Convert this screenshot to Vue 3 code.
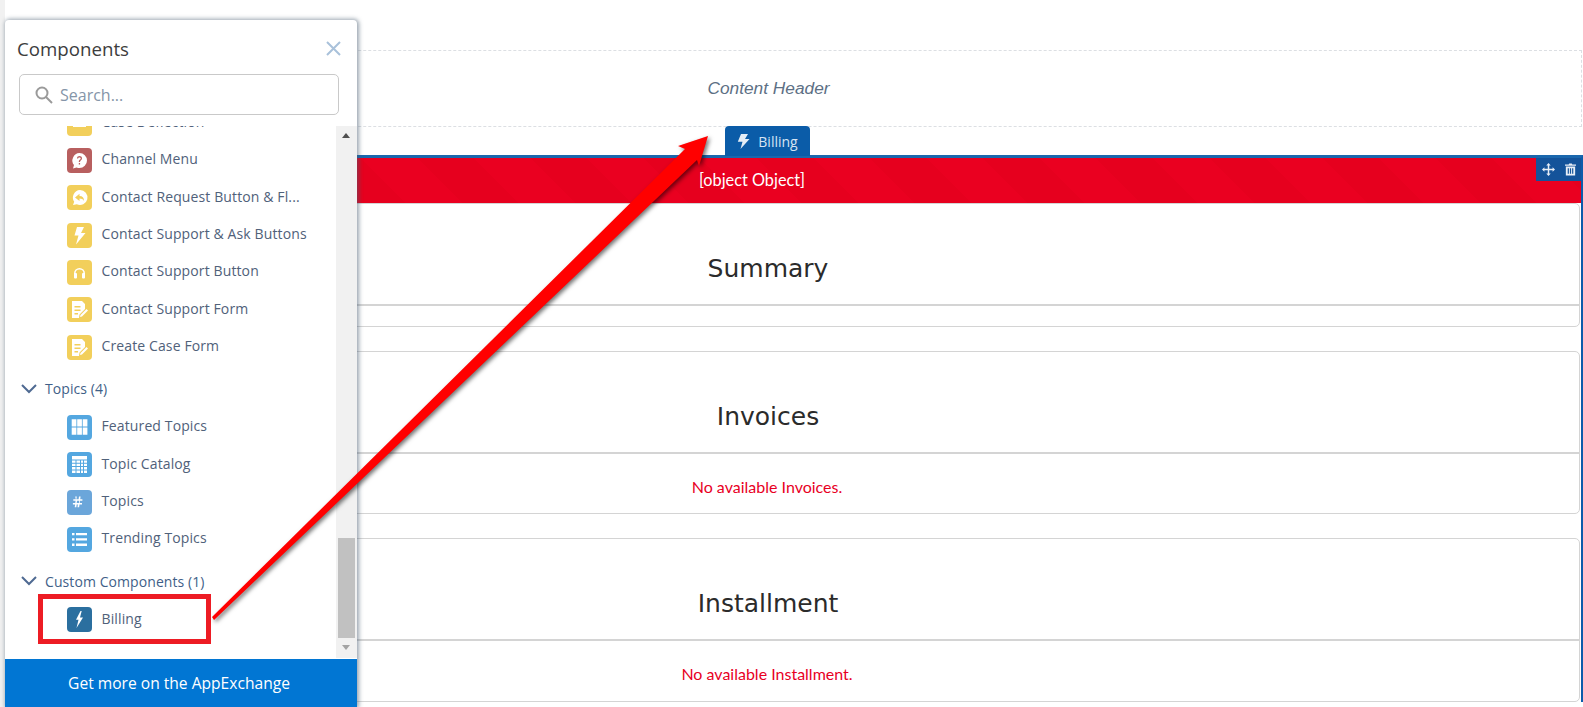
<script setup>
const groups = [
  {
    label: null,
    items: [
      { name: 'Case Deflection', icon: 'lines', color: '#f2cf5b' },
      { name: 'Channel Menu', icon: 'question', color: '#b85f5f' },
      { name: 'Contact Request Button & Fl...', icon: 'reply', color: '#f2cf5b' },
      { name: 'Contact Support & Ask Buttons', icon: 'bolt', color: '#f2cf5b' },
      { name: 'Contact Support Button', icon: 'headset', color: '#f2cf5b' },
      { name: 'Contact Support Form', icon: 'form', color: '#f2cf5b' },
      { name: 'Create Case Form', icon: 'form', color: '#f2cf5b' }
    ]
  },
  {
    label: 'Topics (4)',
    items: [
      { name: 'Featured Topics', icon: 'grid', color: '#54a7e0' },
      { name: 'Topic Catalog', icon: 'table', color: '#54a7e0' },
      { name: 'Topics', icon: 'hash', color: '#6ba6da' },
      { name: 'Trending Topics', icon: 'list', color: '#54a7e0' }
    ]
  },
  {
    label: 'Custom Components (1)',
    items: [{ name: 'Billing', icon: 'custom', color: '#2b6f9f', boxed: true }]
  }
]

const sections = [
  { title: 'Summary', message: '' },
  { title: 'Invoices', message: 'No available Invoices.' },
  { title: 'Installment', message: 'No available Installment.' }
]
</script>

<template>
  <div class="page">
    <main class="canvas">
      <div class="content-header">Content Header</div>
      <section class="frame">
        <div class="band">[object Object]</div>
        <div class="cards">
          <div v-for="s in sections" :key="s.title" class="card" :class="{ empty: !s.message }">
            <h2>{{ s.title }}</h2>
            <p>{{ s.message }}</p>
          </div>
        </div>
        <div class="frame-tools">
          <svg width="13" height="13" viewBox="0 0 14 14" fill="#e8eef6">
            <path d="M7 0l2.400 2.600H7.800v3.600h3.600V4.600L14 7l-2.600 2.400V7.800H7.800v3.600h1.600L7 14l-2.400-2.600h1.600V7.800H2.600v1.600L0 7l2.600-2.400v1.600h3.600V2.600H4.600z" />
          </svg>
          <svg width="11" height="13" viewBox="0 0 13 14" fill="#e8eef6">
            <path d="M5 0h3l.6 1.200H13v1.400H0V1.200h4.400zM1 3.600h11V14H1zm2.200 2v6.400h1.400V5.600zm2.600 0v6.400h1.400V5.600zm2.600 0v6.400h1.400V5.600z" />
          </svg>
        </div>
      </section>
      <div class="drop-tab">
        <svg width="13" height="15" viewBox="0 0 13 15" fill="#e4edf6">
          <path d="M4 0h7L8 5h4.500L3.500 15l2-7.200H.8z" />
        </svg>
        <span>Billing</span>
      </div>
    </main>

    <div class="edge"></div>

    <aside class="panel">
      <header class="panel-head">
        <span class="panel-title">Components</span>
        <svg class="close" width="15" height="15" viewBox="0 0 15 15" fill="none" stroke="#a9c1da" stroke-width="2">
          <path d="M1 1l13 13M14 1L1 14" />
        </svg>
      </header>
      <div class="search">
        <svg width="18" height="18" viewBox="0 0 18 18" fill="none" stroke="#9a9a9a" stroke-width="2">
          <circle cx="7" cy="7" r="5.500" />
          <path d="M11 11l6 6" />
        </svg>
        <span>Search...</span>
      </div>

      <div class="list-wrap">
        <div class="list">
          <div class="list-inner">
            <div v-for="g in groups" :key="g.name" class="group">
              <div v-if="g.label" class="group-label">
                <svg width="16" height="10" viewBox="0 0 16 10" fill="none" stroke="#4f6a92" stroke-width="2">
                  <path d="M1 1l7 7 7-7" />
                </svg>
                <span>{{ g.label }}</span>
              </div>
              <div v-for="item in g.items" :key="item.name" class="row" :class="{ boxed: item.boxed }">
                <span class="tile" :style="{ background: item.color }">
                  <svg width="25" height="25" viewBox="0 0 25 25" fill="#fff">
                    <path v-if="item.icon === 'lines'" d="M6 4h13v2H6zM6 9h13v2H6zM6 14h13v2H6z" />
                    <template v-else-if="item.icon === 'question'">
                      <path d="M12.500 5a7.500 7.500 0 0 1 0 15c-1 0-2-.2-2.900-.6L6 20.500l1-3.400A7.500 7.500 0 0 1 12.500 5z" />
                      <path d="M10 10.500c0-3.200 5-3.200 5 0 0 1.800-2 1.700-2 3.500h-1.200c0-2.500 1.900-2.300 1.900-3.500 0-1.400-2.500-1.400-2.500 0zM11.800 15h1.300v1.400h-1.300z" fill="#b85f5f" />
                    </template>
                    <template v-else-if="item.icon === 'reply'">
                      <path d="M13 5a7.500 7.500 0 1 1-3.200 14.300L6 20l1.200-3.300A7.500 7.500 0 0 1 13 5z" />
                      <path d="M8 12.500l4.500-3.700v2.200c3 0 4.500 1.800 4.500 5-1-1.800-2.400-2.500-4.500-2.500v2.500z" fill="#f2cf5b" />
                    </template>
                    <path v-else-if="item.icon === 'bolt'" d="M10 4h7l-3 6h4.500L9 21.500l2.500-9H7.500z" />
                    <template v-else-if="item.icon === 'headset'">
                      <path d="M7 13.500a5.500 5.500 0 0 1 11 0v3h-1.500v-3a4 4 0 0 0-8 0v3H7z" />
                      <rect x="7" y="13" width="3" height="5.500" rx="1" />
                      <rect x="15" y="13" width="3" height="5.500" rx="1" />
                    </template>
                    <template v-else-if="item.icon === 'form'">
                      <path d="M5 4h10l3 3v5l-5.500 5.500-.5 3.500H5z" />
                      <path d="M7.500 9h6v1.500h-6zM7.500 12.500h6V14h-6zM7.500 16h3.500v1.500H7.500z" fill="#f2cf5b" />
                      <path d="M19.500 12l1.500 1.500-6 6-2 .5.500-2z" />
                    </template>
                    <path v-else-if="item.icon === 'grid'" d="M4.700 4.300h4.700v7.200H4.700zM10.200 4.300h4.700v7.200h-4.700zM15.700 4.300h4.700v7.200h-4.700zM4.700 12.500h4.700v7.200H4.700zM10.200 12.500h4.700v7.200h-4.700zM15.700 12.500h4.700v7.200h-4.700z" />
                    <path v-else-if="item.icon === 'table'" d="M5 4h15v3.500H5zM5 8.500h3.500v2.300H5zM9.500 8.500H13v2.300H9.500zM14 8.500h2v2.300h-2zM17 8.500h3v2.300h-3zM5 11.800h3.500v2.300H5zM9.500 11.800H13v2.300H9.500zM14 11.800h2v2.300h-2zM17 11.800h3v2.300h-3zM5 15.100h3.500v2.300H5zM9.500 15.100H13v2.300H9.500zM14 15.100h2v2.300h-2zM17 15.100h3v2.300h-3zM5 18.400h3.500V21H5zM9.500 18.400H13V21H9.500zM14 18.400h2V21h-2zM17 18.400h3V21h-3z" />
                    <path v-else-if="item.icon === 'hash'" d="M8.200 6.500h1.600l-.4 2.700h2.200l.4-2.700h1.600l-.4 2.700h2.200v1.500h-2.400l-.3 2.200h2.300v1.500h-2.500l-.4 2.800h-1.600l.4-2.800H9.700l-.4 2.800H7.700l.4-2.800H5.900v-1.500h2.400l.3-2.200H6.300V9.200h2.500zM10 10.700l-.3 2.200h2.200l.3-2.200z" />
                    <path v-else-if="item.icon === 'list'" d="M5 6h2.500v2.300H5zM9 6h11v2.300H9zM5 11.300h2.500v2.300H5zM9 11.300h11v2.300H9zM5 16.600h2.500v2.300H5zM9 16.600h11v2.300H9z" />
                    <path v-else-if="item.icon === 'custom'" d="M13.500 4l1.200.1-1.700 6.400h3L9.500 21l2-8.300H9z" />
                  </svg>
                </span>
                <span class="row-name">{{ item.name }}</span>
              </div>
            </div>
          </div>
        </div>
        <div class="scrollbar">
          <span class="arrow up"></span>
          <div class="track"><div class="thumb"></div></div>
          <span class="arrow down"></span>
        </div>
      </div>

      <footer class="panel-foot">Get more on the AppExchange</footer>
    </aside>

    <svg class="big-arrow" width="1583" height="707" viewBox="0 0 1583 707">
      <polygon points="708,136 678,146 685,149 212,617 214,620 697,160 699,166" fill="#ff0000" />
    </svg>
  </div>
</template>

<style>
html,
body {
  margin: 0;
  background: #fff;
  overflow: hidden;
}
</style>

<style scoped>
.page {
  position: relative;
  width: 1583px;
  height: 707px;
  overflow: hidden;
  background: #fff;
  font-family: "Open Sans", sans-serif;
}

.canvas {
  position: relative;
  margin-left: -47px;
  width: 1630px;
  padding-top: 50px;
  box-sizing: border-box;
}

.content-header {
  height: 77px;
  box-sizing: border-box;
  border: 1px dashed #dcdfe3;
  margin-right: 1px;
  padding-left: 2px;
  display: flex;
  align-items: center;
  justify-content: center;
  font: italic 17.3px "Liberation Sans", sans-serif;
  color: #5d7085;
}

.frame {
  position: relative;
  margin-top: 28px;
  border-top: 3px solid #1a67ad;
  border-right: 2px solid #0b5cab;
}

.band {
  height: 45px;
  display: flex;
  align-items: center;
  justify-content: center;
  padding: 0 30px 2px 0;
  box-sizing: border-box;
  background: repeating-linear-gradient(45deg, #ea0020 0 40px, #e6001e 40px 80px);
  color: #fff;
  font: 16.3px Lato, sans-serif;
}

.frame-tools {
  position: absolute;
  top: 0;
  right: 0;
  width: 45px;
  height: 23px;
  display: flex;
  align-items: center;
  justify-content: center;
  gap: 10px;
  background: #14539a;
}

.cards {
  display: flex;
  flex-direction: column;
  gap: 24px;
  margin-right: 1px;
}

.card {
  border: 1px solid #d4d4d4;
  border-radius: 5px;
}

.card h2 {
  margin: 0;
  height: 102px;
  box-sizing: border-box;
  padding: 33px 0 0 3px;
  border-bottom: 2px solid #d4d4d4;
  text-align: center;
  font: 25px/64px "DejaVu Sans", sans-serif;
  color: #2b2b2b;
}

.card p {
  margin: 0;
  height: 60px;
  box-sizing: border-box;
  padding: 5px 0 0 1px;
  display: flex;
  align-items: center;
  justify-content: center;
  font: 16px Lato, sans-serif;
  color: #e8001f;
}

.card:nth-child(2) p {
  height: 59px;
}

.card.empty p {
  height: 20px;
  padding: 0;
}

.drop-tab {
  position: absolute;
  top: 126px;
  left: 772px;
  width: 85px;
  height: 30px;
  display: flex;
  align-items: center;
  justify-content: center;
  gap: 8px;
  border-radius: 4px 4px 0 0;
  background: #0b5ca8;
  color: #d6e4f3;
  font-size: 14px;
}

.edge {
  position: absolute;
  top: 0;
  left: 0;
  width: 5px;
  height: 707px;
  background: #f1f1f1;
}

.panel {
  position: absolute;
  top: 20px;
  left: 5px;
  width: 352px;
  height: 687px;
  display: flex;
  flex-direction: column;
  background: #fff;
  border-radius: 4px 4px 0 0;
  box-shadow: 1px 0 4px 1px rgba(70, 90, 110, 0.55);
}

.panel-head {
  height: 54px;
  box-sizing: border-box;
  padding: 3px 16px 0 12px;
  display: flex;
  align-items: center;
  justify-content: space-between;
}

.panel-title {
  font-size: 18.7px;
  color: #3d3d3d;
}

.search {
  margin: 0 18px 0 14px;
  height: 39px;
  display: flex;
  align-items: center;
  gap: 7px;
  padding-left: 15px;
  border: 1px solid #c9c9c9;
  border-radius: 5px;
  color: #8595a8;
  font-size: 16px;
}

.list-wrap {
  flex: 1;
  min-height: 0;
  margin-top: 11px;
  display: flex;
}

.list {
  flex: 1;
  min-width: 0;
  overflow: hidden;
}

.list-inner {
  margin-top: -21.5px;
}

.group + .group {
  margin-top: 13px;
}

.group-label {
  height: 24px;
  box-sizing: border-box;
  margin-bottom: 6px;
  padding: 0 0 4px 16px;
  display: flex;
  align-items: center;
  gap: 8px;
  color: #3f5f88;
  font-size: 14px;
  letter-spacing: 0.08px;
}

.row {
  position: relative;
  height: 37.33px;
  padding-left: 62px;
  display: flex;
  align-items: center;
  gap: 9.5px;
  color: #50617a;
  font-size: 14px;
  letter-spacing: 0.12px;
}

.row-name {
  padding-bottom: 3px;
}

.tile {
  width: 25px;
  height: 25px;
  flex: none;
  border-radius: 4px;
}

.tile svg {
  display: block;
}

.boxed::after {
  content: "";
  position: absolute;
  left: 33px;
  top: -7px;
  width: 163px;
  height: 40px;
  border: 5px solid #ed1c24;
}

.scrollbar {
  width: 21px;
  display: flex;
  flex-direction: column;
  background: #f1f1f1;
}

.track {
  flex: 1;
  position: relative;
}

.thumb {
  position: absolute;
  left: 2px;
  right: 2px;
  bottom: 0;
  height: 100px;
  background: #c1c1c1;
}

.arrow {
  height: 20px;
  flex: none;
  position: relative;
}

.arrow::before {
  content: "";
  position: absolute;
  left: 6px;
  border-left: 4.5px solid transparent;
  border-right: 4.5px solid transparent;
}

.arrow.up::before {
  top: 7px;
  border-bottom: 5px solid #505050;
}

.arrow.down::before {
  top: 7px;
  border-top: 5px solid #a3a3a3;
}

.panel-foot {
  height: 48px;
  flex: none;
  display: flex;
  align-items: center;
  justify-content: center;
  margin-top: 1px;
  padding-right: 4px;
  background: #0176d3;
  color: #fff;
  font-size: 15.6px;
}

.big-arrow {
  position: absolute;
  top: 0;
  left: 0;
  filter: drop-shadow(2px 2px 2px rgba(0, 0, 0, 0.55));
}
</style>
